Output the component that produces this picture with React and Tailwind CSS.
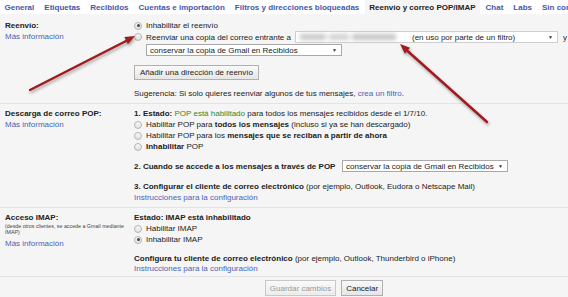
import React from "react";

const tabs = [
  "General",
  "Etiquetas",
  "Recibidos",
  "Cuentas e importación",
  "Filtros y direcciones bloqueadas",
  "Reenvío y correo POP/IMAP",
  "Chat",
  "Labs",
  "Sin conexión",
];
const ACTIVE = "Reenvío y correo POP/IMAP";

function Radio({ checked }) {
  return (
    <span className="inline-flex h-[8px] w-[8px] shrink-0 items-center justify-center rounded-full border border-[#b4b4b4] bg-gradient-to-b from-[#f8f8f8] to-[#e2e2e2]">
      {checked && <span className="h-[3px] w-[3px] rounded-full bg-[#444]" />}
    </span>
  );
}

function Select({ children, className = "" }) {
  return (
    <div
      className={`flex h-[12px] shrink-0 items-center justify-between border border-[#a9a9a9] bg-white pl-[3px] pr-[4px] ${className}`}
    >
      <span className="whitespace-nowrap">{children}</span>
      <span className="text-[5px] text-[#333]">▼</span>
    </div>
  );
}

function RadioRow({ checked, children }) {
  return (
    <div className="flex h-[11px] items-center gap-[4px]">
      <Radio checked={checked} />
      <span>{children}</span>
    </div>
  );
}

function Link({ children }) {
  return <span className="text-[#4a63b5]">{children}</span>;
}

export default function App() {
  return (
    <div className="relative h-[297px] w-[568px] overflow-hidden bg-[#f5f5f5] font-['Liberation_Sans',Arial,sans-serif] text-[8px] leading-[11px] text-[#222]">
      {/* tabs */}
      <div className="flex h-[14px] items-stretch gap-[1px] overflow-hidden whitespace-nowrap bg-white font-bold">
        {tabs.map((t) => (
          <div
            key={t}
            className={`flex shrink-0 items-center px-[4.5px] ${
              t === ACTIVE ? "bg-[#f5f5f5] text-[#222]" : "text-[#4457a8]"
            }`}
          >
            {t}
          </div>
        ))}
      </div>

      {/* Reenvio */}
      <div className="flex h-[90px] border-b border-[#e3e3e3] pt-[6px]">
        <div className="w-[134px] shrink-0 pl-[5px]">
          <div className="font-bold">Reenvío:</div>
          <Link>Más información</Link>
        </div>
        <div className="flex-1 whitespace-nowrap">
          <RadioRow checked>Inhabilitar el reenvío</RadioRow>
          <div className="flex h-[12px] items-center gap-[4px]">
            <Radio />
            <span>Reenviar una copia del correo entrante a</span>
            <div className="relative flex h-[12px] w-[263px] shrink-0 items-center justify-between border border-[#cfcfcf] bg-white pr-[4px]">
              <div className="flex h-full w-[116px] items-center gap-[3px] px-[4px] blur-[2px]">
                <span className="h-[6px] w-[26px] bg-[#c8c8c8]" />
                <span className="h-[6px] w-[20px] bg-[#d0d0d0]" />
                <span className="h-[6px] w-[44px] bg-[#c4c4c4]" />
              </div>
              <span className="flex-1">(en uso por parte de un filtro)</span>
              <span className="text-[5px] text-[#333]">▼</span>
            </div>
            <span className="ml-[1px]">y</span>
          </div>
          <div className="mt-[1px] flex pl-[12px]">
            <Select className="w-[196px]">conservar la copia de Gmail en Recibidos</Select>
          </div>
          <button className="mt-[9px] flex h-[15px] items-center border border-[#b0b0b0] bg-gradient-to-b from-[#f9f9f9] to-[#e6e6e6] px-[5px] text-[#222]">
            Añadir una dirección de reenvío
          </button>
          <div className="mt-[8px]">
            Sugerencia: Si solo quieres reenviar algunos de tus mensajes,{" "}
            <Link>crea un filtro</Link>.
          </div>
        </div>
      </div>

      {/* POP */}
      <div className="flex h-[104px] border-b border-[#e3e3e3] pt-[4px]">
        <div className="w-[134px] shrink-0 pl-[5px]">
          <div className="font-bold">Descarga de correo POP:</div>
          <Link>Más información</Link>
        </div>
        <div className="flex-1 whitespace-nowrap">
          <div>
            <b>1. Estado: </b>
            <span className="text-[#2c8a2c]">POP está habilitado</span> para
            todos los mensajes recibidos desde el 1/7/10.
          </div>
          <RadioRow>
            Habilitar POP para <b>todos los mensajes</b> (incluso si ya se han
            descargado)
          </RadioRow>
          <RadioRow>
            Habilitar POP para los <b>mensajes que se reciban a partir de ahora</b>
          </RadioRow>
          <RadioRow>
            <b>Inhabilitar</b> POP
          </RadioRow>
          <div className="mt-[8px] flex h-[12px] items-center">
            <span className="w-[208px] shrink-0 font-bold">
              2. Cuando se accede a los mensajes a través de POP
            </span>
            <Select className="w-[166px]">conservar la copia de Gmail en Recibidos</Select>
          </div>
          <div className="mt-[9px]">
            <b>3. Configurar el cliente de correo electrónico</b> (por ejemplo,
            Outlook, Eudora o Netscape Mail)
          </div>
          <Link>Instrucciones para la configuración</Link>
        </div>
      </div>

      {/* IMAP */}
      <div className="flex h-[69px] border-b border-[#e3e3e3] pt-[4px]">
        <div className="w-[134px] shrink-0 pl-[5px]">
          <div className="font-bold">Acceso IMAP:</div>
          <div className="text-[5.3px] leading-[6px] text-[#444]">
            (desde otros clientes, se accede a Gmail mediante
            <br />
            IMAP)
          </div>
          <div className="mt-[3px]">
            <Link>Más información</Link>
          </div>
        </div>
        <div className="flex-1 whitespace-nowrap">
          <div className="font-bold">Estado: IMAP está inhabilitado</div>
          <RadioRow>Habilitar IMAP</RadioRow>
          <RadioRow checked>Inhabilitar IMAP</RadioRow>
          <div className="mt-[8px]">
            <b>Configura tu cliente de correo electrónico</b> (por ejemplo,
            Outlook, Thunderbird o iPhone)
          </div>
          <div className="-mt-[1px]">
            <Link>Instrucciones para la configuración</Link>
          </div>
        </div>
      </div>

      {/* buttons */}
      <div className="flex justify-center gap-[5px] pt-[3px] pl-[80px]">
        <button className="h-[16px] border border-[#c8c8c8] bg-gradient-to-b from-[#fafafa] to-[#ececec] px-[4px] text-[#9a9a9a]">
          Guardar cambios
        </button>
        <button className="h-[16px] border border-[#b0b0b0] bg-gradient-to-b from-[#f9f9f9] to-[#e6e6e6] px-[4px] text-[#222]">
          Cancelar
        </button>
      </div>

      {/* annotation arrows */}
      <svg
        className="pointer-events-none absolute left-0 top-0"
        width="568"
        height="297"
        style={{ filter: "drop-shadow(1px 2px 1.5px rgba(0,0,0,0.35))" }}
      >
        <g stroke="#a01a1e" strokeWidth="2.4" strokeLinecap="round" fill="#a01a1e">
          <line x1="30" y1="90" x2="127" y2="40.5" />
          <polygon points="135,36 127.9,44.2 124.3,37" stroke="none" />
          <line x1="487" y1="122" x2="407" y2="50.5" />
          <polygon points="400,44 410.1,47.7 404.8,53.7" stroke="none" />
        </g>
      </svg>
    </div>
  );
}
